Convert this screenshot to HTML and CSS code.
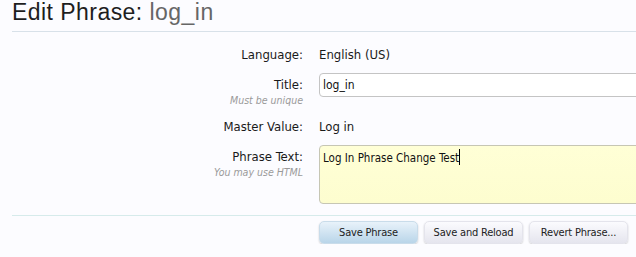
FILE: index.html
```html
<!DOCTYPE html>
<html>
<head>
<meta charset="utf-8">
<link rel="stylesheet" href="styles.css">
</head>
<body>
<div class="page">
  <h1 class="title">Edit Phrase: <em>log_in</em></h1>
  <form class="form">
    <div class="row">
      <div class="label">Language:</div>
      <div class="value">English (US)</div>
    </div>
    <div class="row row-input">
      <div class="label">Title:<span class="hint">Must be unique</span></div>
      <div class="value"><input class="text" type="text" value="log_in"></div>
    </div>
    <div class="row">
      <div class="label">Master Value:</div>
      <div class="value">Log in</div>
    </div>
    <div class="row row-input">
      <div class="label">Phrase Text:<span class="hint">You may use HTML</span></div>
      <div class="value"><div class="area">Log In Phrase Change Test<span class="caret"></span></div></div>
    </div>
    <div class="submit">
      <div class="label"></div>
      <div class="buttons">
        <button type="button" class="btn primary">Save Phrase</button>
        <button type="button" class="btn">Save and Reload</button>
        <button type="button" class="btn">Revert Phrase...</button>
      </div>
    </div>
  </form>
</div>
</body>
</html>
```
FILE: styles.css
```css
html, body {
  margin: 0;
  padding: 0;
  background: #fcfcff;
  overflow: hidden;
}
body {
  font-family: "DejaVu Sans Condensed", "DejaVu Sans", sans-serif;
  font-size: 13px;
  color: #1a1a1a;
}
.page {
  padding-left: 12px;
}
.title {
  margin: 0;
  font-family: "Liberation Sans", Arial, sans-serif;
  font-weight: normal;
  font-size: 23px;
  line-height: 25px;
  letter-spacing: 0.45px;
  padding-bottom: 6px;
  color: #1e1e1e;
  border-bottom: 1px solid #d8e1e9;
}
.title em {
  font-style: normal;
  color: #666;
}
.form {
  padding-top: 14px;
}
.row, .submit {
  display: grid;
  grid-template-columns: 291px 1fr;
  column-gap: 16px;
}
.row + .row {
  margin-top: 9px;
}
.row-input + .row {
  margin-top: 10px;
}
.label {
  text-align: right;
  line-height: 18px;
}
.value {
  line-height: 18px;
  min-width: 0;
}
.row-input .label {
  padding-top: 3px;
  line-height: 17px;
}
.hint {
  display: block;
  font-size: 10.5px;
  line-height: 15px;
  font-style: italic;
  color: #9a9a9a;
}
.text {
  display: block;
  box-sizing: border-box;
  width: 360px;
  height: 24px;
  margin: 0;
  padding: 0 3px;
  font: inherit;
  font-size: 12px;
  color: #111;
  border: 1px solid #c4c4c4;
  border-radius: 4px;
  background: #fff;
  outline: none;
}
.area {
  box-sizing: border-box;
  width: 360px;
  height: 59px;
  padding: 3px 3px;
  font-size: 11.5px;
  line-height: 18px;
  color: #111;
  border: 1px solid #c6c6b4;
  border-radius: 4px;
  background: linear-gradient(#ffffd6, #fdfdcf);
}
.caret {
  display: inline-block;
  width: 1px;
  height: 16px;
  background: #000;
  vertical-align: -3px;
}
.submit {
  margin-top: 11px;
  border-top: 1px solid #d6ebeb;
  padding-top: 5px;
}
.buttons {
  display: flex;
  gap: 6px;
}
.btn {
  box-sizing: border-box;
  height: 23px;
  width: 99px;
  padding: 0;
  font-family: "DejaVu Sans Condensed", "DejaVu Sans", sans-serif;
  font-size: 11px;
  letter-spacing: -0.2px;
  color: #222;
  border: 1px solid #e4e4ec;
  border-radius: 5px;
  background: linear-gradient(#fbfbfe, #e5e5ee);
  box-shadow: 0 1px 2px rgba(0,0,0,0.2);
}
.btn.primary {
  border-color: #c9dcea;
  background: linear-gradient(#e8f2fa, #b9d5e9);
}
```
